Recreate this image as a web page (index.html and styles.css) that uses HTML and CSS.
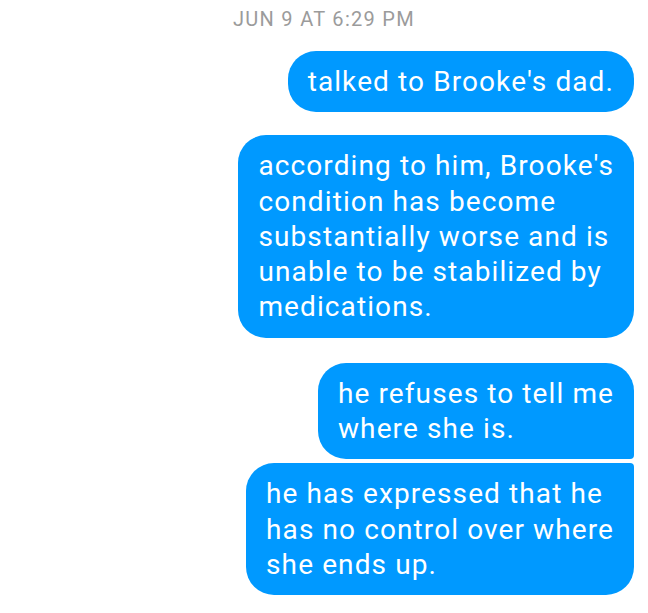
FILE: index.html
```html
<!DOCTYPE html>
<html lang="en">
<head>
<meta charset="utf-8">
<title>Messages</title>
<link rel="stylesheet" href="styles.css">
</head>
<body>
<main class="thread">
  <div class="stamp">JUN 9 AT 6:29 PM</div>
  <div class="msg m1">talked to Brooke's dad.</div>
  <div class="msg m2">according to him, Brooke's<br>condition has become<br>substantially worse and is<br>unable to be stabilized by<br>medications.</div>
  <div class="group">
    <div class="msg first">he refuses to tell me<br>where she is.</div>
    <div class="msg last">he has expressed that he<br>has no control over where<br>she ends up.</div>
  </div>
</main>
</body>
</html>
```
FILE: styles.css
```css
* { box-sizing: border-box; }
html, body { margin: 0; padding: 0; background: #fff; }
body { font-family: Roboto, "Noto Sans", sans-serif; }
.thread {
  display: flex;
  flex-direction: column;
  align-items: flex-end;
  padding: 7px 14px 0 0;
}
.stamp {
  align-self: stretch;
  text-align: center;
  color: #9b9b9b;
  font-size: 20px;
  line-height: 24px;
  letter-spacing: 1.3px;
  padding-left: 14px;
  margin-bottom: 20px;
}
.msg {
  background: #0099ff;
  color: #fff;
  font-size: 28px;
  line-height: 35.3px;
  letter-spacing: 1.1px;
  padding: 13px 20px;
  border-radius: 28px;
  max-width: 420px;
  white-space: nowrap;
}
.m1 { margin-bottom: 23px; }
.m2 { margin-bottom: 25px; }
.group {
  display: flex;
  flex-direction: column;
  align-items: flex-end;
  gap: 4px;
}
.first { border-bottom-right-radius: 4px; }
.last { border-top-right-radius: 4px; }
```
